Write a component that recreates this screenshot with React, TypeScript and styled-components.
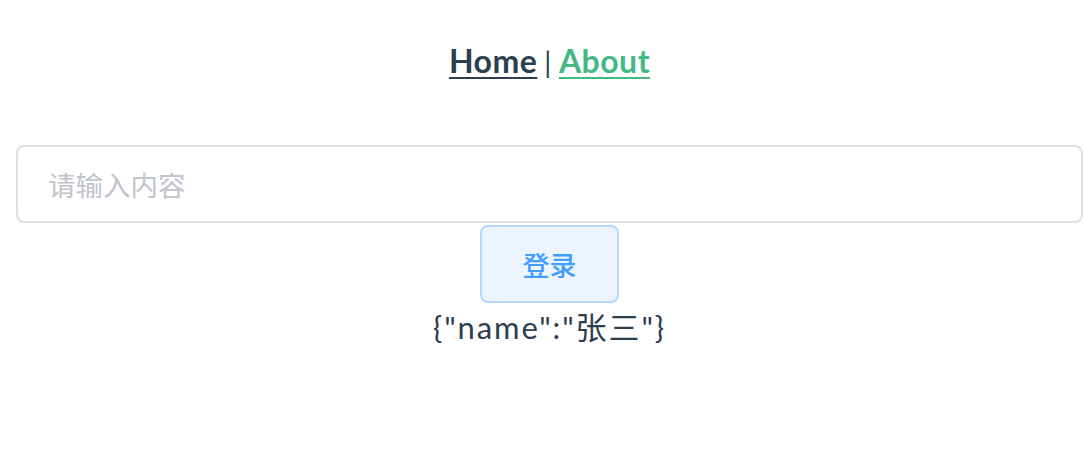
import React from "react";
import styled, { createGlobalStyle } from "styled-components";

const Global = createGlobalStyle`
  html, body { margin: 0; padding: 0; background: #fff; }
  body { font-family: Lato, "Noto Sans", "Noto Sans CJK SC", sans-serif; -webkit-font-smoothing: antialiased; }
`;

const Page = styled.div`
  padding: 0 9px 0 16px;
  text-align: center;
  color: #2c3e50;
  font-size: 32px;
`;

const Nav = styled.nav`
  padding: 39px 0 0;
  height: 145px;
  box-sizing: border-box;
  line-height: 44px;
  font-size: 32px;
  letter-spacing: 0.5px;
`;

const NavLink = styled.a<{ $active?: boolean }>`
  font-weight: bold;
  color: ${(p) => (p.$active ? "#42b983" : "#2c3e50")};
  text-decoration: underline;
  text-decoration-thickness: 2px;
  text-underline-offset: 4px;
  cursor: pointer;
`;

const Sep = styled.span`
  margin: 0 7px;
  font-weight: normal;
  font-size: 28px;
`;

const InputBox = styled.input`
  display: block;
  width: 100%;
  box-sizing: border-box;
  height: 78px;
  border: 2px solid #dcdfe6;
  border-radius: 8px;
  padding: 0 30px;
  font-size: 27.5px;
  font-family: "Noto Sans CJK SC", "Noto Sans", sans-serif;
  color: #606266;
  outline: none;
  &::placeholder { color: #c0c4cc; }
`;

const Button = styled.button`
  margin-top: 2px;
  width: 139px;
  height: 78px;
  border: 2px solid #b3d8ff;
  background: #ecf5ff;
  color: #409eff;
  border-radius: 8px;
  font-size: 27px;
  font-family: "Noto Sans CJK SC", "Noto Sans", sans-serif;
  font-weight: 500;
  cursor: pointer;
`;

const Output = styled.div`
  font-size: 31px;
  line-height: 48px;
  letter-spacing: 1.9px;
  font-family: Lato, "Noto Sans CJK SC", sans-serif;
`;

export default function App() {
  return (
    <Page>
      <Global />
      <Nav>
        <NavLink>Home</NavLink>
        <Sep>|</Sep>
        <NavLink $active>About</NavLink>
      </Nav>
      <InputBox placeholder="请输入内容" />
      <Button>登录</Button>
      <Output>{'{"name":"张三"}'}</Output>
    </Page>
  );
}
